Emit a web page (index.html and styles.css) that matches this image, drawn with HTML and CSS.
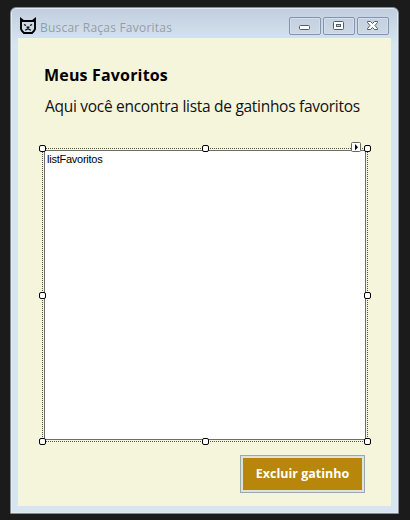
FILE: index.html
```html
<!DOCTYPE html>
<html lang="pt-BR">
<head>
<meta charset="utf-8">
<title>Buscar Raças Favoritas</title>
<link rel="stylesheet" href="styles.css">
</head>
<body>
<main class="window">
  <header class="titlebar">
    <svg class="cat" width="18" height="18" viewBox="0 0 18 18" fill="none" stroke="#000">
      <path d="M2 2v10l1 2 2 2h8l2-2 1-2V2l-2.500 2h-9z" stroke-width="1.900"/>
      <path d="M5 7.500l2 1M13 7.500l-2 1M7.500 10.200h3M9 10v2M6.200 13.200l2.800-1.500 2.800 1.500" stroke-width="1.300"/>
    </svg>
    <h1 class="caption">Buscar Raças Favoritas</h1>
    <div class="controls">
      <button class="control" aria-label="Minimizar"><svg width="30" height="16" viewBox="0 0 30 16"><rect x="9.500" y="7.500" width="10" height="4" rx="1" fill="#fff" stroke="#535c69"/></svg></button>
      <button class="control" aria-label="Maximizar"><svg width="30" height="16" viewBox="0 0 30 16"><rect x="9.500" y="3.500" width="10" height="8" rx="1" fill="#fff" stroke="#535c69"/><rect x="12.500" y="6.500" width="4" height="2" fill="#c3d0df" stroke="#535c69"/></svg></button>
      <button class="control" aria-label="Fechar"><svg width="30" height="16" viewBox="0 0 30 16"><path d="M9.500 3.500h3l2 2 2-2h3v1l-2.500 3 2.500 3v1h-3l-2-2-2 2h-3v-1l2.500-3-2.500-3z" fill="#fff" stroke="#535c69"/></svg></button>
    </div>
  </header>
  <section class="client">
    <h2 class="heading">Meus Favoritos</h2>
    <p class="intro">Aqui você encontra lista de gatinhos favoritos</p>
    <div class="listbox">
      <span>listFavoritos</span>
      <svg class="selection" width="332" height="304" viewBox="0 0 332 304" shape-rendering="crispEdges">
        <path d="M5 8.500h326M5 301.500h326M5.500 8v294M330.500 8v294" fill="none" stroke="#55554d" stroke-dasharray="1 1"/>
      </svg>
      <i class="handle nw"></i><i class="handle n"></i><i class="handle ne"></i>
      <i class="handle w"></i><i class="handle e"></i>
      <i class="handle sw"></i><i class="handle s"></i><i class="handle se"></i>
      <svg class="smart-tag" width="10" height="10" viewBox="0 0 10 10"><rect x=".5" y=".5" width="9" height="9" rx="1" fill="#fff" stroke="#666"/><path d="M4 2v6.500l3-3.200z"/></svg>
    </div>
    <button class="remove">Excluir gatinho</button>
  </section>
</main>
</body>
</html>
```
FILE: styles.css
```css
* { box-sizing: border-box; }
body { margin: 0; width: 410px; height: 520px; padding: 7px 11px 6px 10px; overflow: hidden; background: #1b1b1b; font-family: "Open Sans", "Noto Sans", sans-serif; }
h1, h2, p { margin: 0; white-space: nowrap; }
.window { width: 389px; height: 507px; border: 1px solid #838b93; border-radius: 6px 6px 0 0; padding: 0 7px 7px; background: linear-gradient(#c1cede, #d7e4f1 36px); box-shadow: inset 0 0 0 1px #e3eaf1; }
.titlebar { height: 30px; display: flex; align-items: flex-start; }
.cat { margin: 9px 0 0 1px; }
.caption { flex: 1; margin: 11px 0 0 3px; font-size: 12px; line-height: 18px; font-weight: 400; letter-spacing: .22px; color: #969da5; }
.controls { display: flex; gap: 2px; margin: 9px 2px 0 0; }
.control { width: 32px; height: 18px; padding: 0; border: 1px solid #8494ad; border-radius: 2px; background: linear-gradient(#c4d0df, #ccd8e6); box-shadow: inset 0 0 0 1px #d5dfea; }
.control svg { display: block; }
.client { width: 373px; height: 468px; background: #f5f5dc; padding: 25px 26px 0; }
.heading { height: 24px; font-size: 16px; line-height: 24px; font-weight: 700; letter-spacing: .17px; }
.intro { height: 24px; margin: 7px 0 0 1px; font-size: 15.5px; line-height: 24px; letter-spacing: -.29px; color: #111; }
.listbox { position: relative; width: 322px; height: 290px; margin-top: 32px; border: 1px solid #6d6d6d; background: #fff; padding: 1px 2px; font: 11px/14px "Liberation Sans", sans-serif; letter-spacing: -.25px; }
.listbox > span { display: block; }
.selection { position: absolute; left: -8px; top: -11px; }
.handle { position: absolute; width: 7px; height: 7px; border: 1px solid #000; border-radius: 2px; background: #fff; }
.nw, .n, .ne { top: -6px; }
.w, .e { top: 141px; }
.sw, .s, .se { top: 287px; }
.nw, .w, .sw { left: -6px; }
.n, .s { left: 157px; }
.ne, .e, .se { left: 319px; }
.smart-tag { position: absolute; left: 306px; top: -9px; }
.remove { display: block; width: 125px; height: 38px; margin: 15px 0 0 196px; padding: 0; border: 1px solid #a0a8a5; background: #b8860b; box-shadow: inset 0 0 0 2px #e1e1db; color: #fff; font: 700 12.5px/34px "Open Sans", "Noto Sans", sans-serif; white-space: nowrap; }
```
